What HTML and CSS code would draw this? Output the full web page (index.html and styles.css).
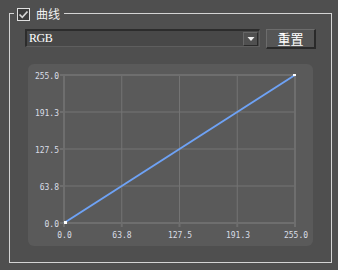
FILE: index.html
```html
<!DOCTYPE html>
<html lang="zh">
<head>
    <meta charset="UTF-8">
    <title>曲线</title>
    <link rel="stylesheet" href="styles.css">
</head>
<body>

    <!-- Curve group box -->
    <div class="group">
        <div class="legend">
            <span class="check">
                <svg width="11" height="11" viewBox="0 0 11 11">
                    <path d="M1.5 5.5 L4.3 8.3 L9.5 2.5" fill="none" stroke="#d4d4d4" stroke-width="1.7"/>
                </svg>
            </span>
            <span class="title">曲线</span>
        </div>

        <div class="toolbar">
            <div class="combo">
                <span class="combo-text">RGB</span>
                <span class="combo-arrow">
                    <svg width="8" height="4" viewBox="0 0 8 4"><path d="M0.5 0 L7.5 0 L4 4 Z" fill="#f0f0f0"/></svg>
                </span>
            </div>
            <button class="reset" type="button">重置</button>
        </div>

        <!-- Curve plot -->
        <div class="chart">
            <svg class="plot" width="285" height="182">
                <g class="grid">
                    <line x1="93.75" y1="11" x2="93.75" y2="159"/>
                    <line x1="151.5" y1="11" x2="151.5" y2="159"/>
                    <line x1="209.25" y1="11" x2="209.25" y2="159"/>
                    <line x1="36" y1="48" x2="267" y2="48"/>
                    <line x1="36" y1="85" x2="267" y2="85"/>
                    <line x1="36" y1="122" x2="267" y2="122"/>
                </g>
                <g class="frame">
                    <rect x="36" y="11" width="231" height="148"/>
                    <line x1="32" y1="11" x2="36" y2="11"/>
                    <line x1="32" y1="48" x2="36" y2="48"/>
                    <line x1="32" y1="85" x2="36" y2="85"/>
                    <line x1="32" y1="122" x2="36" y2="122"/>
                    <line x1="32" y1="159" x2="36" y2="159"/>
                    <line x1="36" y1="159" x2="36" y2="163"/>
                    <line x1="93.75" y1="159" x2="93.75" y2="163"/>
                    <line x1="151.5" y1="159" x2="151.5" y2="163"/>
                    <line x1="209.25" y1="159" x2="209.25" y2="163"/>
                    <line x1="267" y1="159" x2="267" y2="163"/>
                </g>
                <g class="ylabels">
                    <text x="31" y="15">255.0</text>
                    <text x="31" y="52">191.3</text>
                    <text x="31" y="89">127.5</text>
                    <text x="31" y="126">63.8</text>
                    <text x="31" y="163">0.0</text>
                </g>
                <g class="xlabels">
                    <text x="36.5" y="174">0.0</text>
                    <text x="94" y="174">63.8</text>
                    <text x="152" y="174">127.5</text>
                    <text x="210" y="174">191.3</text>
                    <text x="268" y="174">255.0</text>
                </g>
                <line class="curve" x1="36" y1="159" x2="267" y2="11"/>
                <rect class="point" x="36" y="157" width="3" height="3"/>
                <rect class="point" x="265" y="10" width="3" height="2"/>
            </svg>
        </div>
    </div>

</body>
</html>
```

FILE: styles.css
```css
body {
    margin: 0;
    background-color: #4f4f4f;
    font-family: 'Noto Sans CJK SC', sans-serif;
    width: 338px;
    height: 270px;
    overflow: hidden;
}

.group {
    margin: 13px 0 0 9px;
    width: 321px;
    height: 248px;
    border: 1px solid #d4d4d4;
}

.legend {
    display: flex;
    align-items: center;
    gap: 6px;
    width: fit-content;
    height: 14px;
    margin: -7px 0 0 4px;
    padding: 0 4px 0 3px;
    background-color: #4f4f4f;
}

.check {
    display: flex;
    align-items: center;
    justify-content: center;
    width: 11px;
    height: 11px;
    border: 1px solid #e0e0e0;
    background-color: #3c3c3c;
}

.title {
    color: #f2f2f2;
    font-size: 12px;
    line-height: 14px;
}

.toolbar {
    display: flex;
    gap: 6px;
    margin: 8px 0 0 15px;
}

.combo {
    display: flex;
    align-items: center;
    justify-content: space-between;
    box-sizing: border-box;
    width: 235px;
    height: 18px;
    padding: 0 1px 0 2px;
    border-top: 2px solid #2c2c2c;
    border-left: 2px solid #2c2c2c;
    border-right: 1px solid #5e5e5e;
    border-bottom: 1px solid #5e5e5e;
    background-color: #484848;
}

.combo-text {
    color: #ffffff;
    font-family: 'Liberation Serif', serif;
    font-size: 12px;
    letter-spacing: -0.5px;
}

.combo-arrow {
    display: flex;
    align-items: center;
    justify-content: center;
    box-sizing: border-box;
    width: 15px;
    height: 14px;
    border-top: 1px solid #666;
    border-left: 1px solid #666;
    border-right: 1px solid #2a2a2a;
    border-bottom: 1px solid #2a2a2a;
    background-color: #505050;
}

.reset {
    box-sizing: border-box;
    width: 50px;
    height: 20px;
    padding: 0;
    border-top: 1px solid #6c6c6c;
    border-left: 1px solid #6c6c6c;
    border-right: 2px solid #2a2a2a;
    border-bottom: 2px solid #2a2a2a;
    background-color: #555555;
    color: #ffffff;
    font-family: 'Noto Sans CJK SC', sans-serif;
    font-size: 13px;
    line-height: 16px;
}

.chart {
    width: 285px;
    height: 182px;
    margin: 15px 0 0 18px;
    border-radius: 6px;
    background-color: #5a5a5a;
}

.plot {
    display: block;
}

.grid line {
    stroke: #747474;
    stroke-width: 1;
}

.frame rect,
.frame line {
    fill: none;
    stroke: #6e6e6e;
    stroke-width: 2;
}

.ylabels text,
.xlabels text {
    fill: #d9dde6;
    font-family: 'DejaVu Sans Mono', monospace;
    font-size: 8px;
}

.ylabels text {
    text-anchor: end;
}

.xlabels text {
    text-anchor: middle;
}

.curve {
    stroke: #6ea2f5;
    stroke-width: 2;
}

.point {
    fill: #ffffff;
}
```
